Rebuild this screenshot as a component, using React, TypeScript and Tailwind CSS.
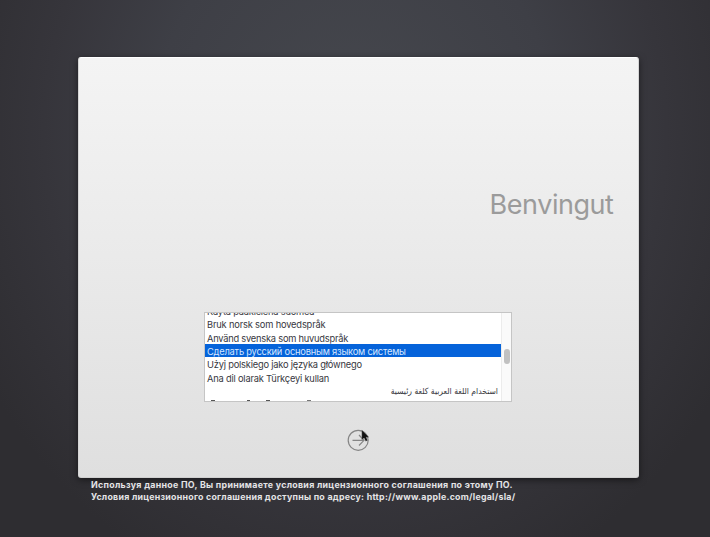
const rows = [
  { text: "Käytä pääkielenä suomea", style: "tracking-[-0.23px]" },
  { text: "Bruk norsk som hovedspråk", style: "tracking-[-0.17px]" },
  { text: "Använd svenska som huvudspråk", style: "tracking-[-0.23px]" },
  { text: "Сделать русский основным языком системы", style: "bg-[#0563da] text-[#d4e6ff] tracking-[-0.2px]" },
  { text: "Użyj polskiego jako języka głównego", style: "tracking-[-0.2px]" },
  { text: "Ana dil olarak Türkçeyi kullan", style: "tracking-[-0.2px]" },
];

function LanguageList() {
  return (
    <div className="mt-[254px] ml-[125px] flex h-[90px] w-[308px] shrink-0 overflow-hidden border border-[#c5c5c5] bg-white font-['Inter','DejaVu_Sans',sans-serif] text-[9.3px] text-[#38383e]">
      <div className="-mt-[9px] w-[296px] shrink-0">
        {rows.map((row) => (
          <div key={row.text} className={`h-[13.33px] pl-[2px] leading-[15px] whitespace-nowrap ${row.style}`}>
            <span>{row.text}</span>
          </div>
        ))}
        <div dir="rtl" className="h-[13.33px] pr-[3px] font-['DejaVu_Sans_Condensed','DejaVu_Sans',sans-serif] text-[8.5px] leading-[15px] whitespace-nowrap">
          <span>استخدام اللغة العربية كلغة رئيسية</span>
        </div>
        {/* Tops of the next row's letters */}
        <div className="mt-[2.6px] flex h-px pl-[6px]">
          <i className="h-px w-[4px] bg-[#555]" />
          <i className="ml-[32px] h-px w-[3px] bg-[#555]" />
          <i className="ml-[16px] h-px w-[4px] bg-[#555]" />
          <i className="ml-[37px] h-px w-[4px] bg-[#777]" />
        </div>
      </div>
      <div className="flex flex-1 justify-center border-l border-[#ececec] bg-[#fafafa] pt-[36px]">
        <div className="h-[15px] w-[6px] rounded-full bg-[#c1c1c1]" />
      </div>
    </div>
  );
}

function ContinueButton() {
  return (
    <button aria-label="Continue" className="mt-[25px] ml-[266px] h-[28px] w-[28px] shrink-0">
      <svg viewBox="0 0 28 28" className="h-[28px] w-[28px] overflow-visible">
        <g fill="none" stroke="#858585" strokeWidth="1.2">
          <circle cx="13.2" cy="13.3" r="10" />
          <path d="M7.5 13.3H19M14 8L19 13.3L14 18.5" />
        </g>
        <path d="M16.8 3V12.8L19.1 11L20.7 14.2L22.6 13.4L21.2 10.2H24Z" fill="#111" stroke="#aaa" strokeWidth="0.3" />
      </svg>
    </button>
  );
}

export default function App() {
  return (
    <main className="h-[537px] w-[710px] overflow-hidden bg-[radial-gradient(ellipse_at_50%_25%,#46484e_0%,#3e3f46_40%,#36353b_62%,#2e2d31_85%)] pt-[57px] font-['Inter',sans-serif]">
      <section className="ml-[78px] flex h-[421px] w-[560.5px] flex-col rounded-[3px] border border-t-white border-r-[#d5d5d5] border-b-[#d0d0d0] border-l-[#d5d5d5] bg-linear-to-b from-[#f4f4f4] to-[#dfdfdf] shadow-[0_2px_7px_rgba(0,0,0,0.5)]">
        <h1 className="h-0 shrink-0 pr-[24px] text-right text-[27px] leading-[293px] font-normal tracking-[-0.45px] text-[#9b9b9b]">
          <span>Benvingut</span>
        </h1>
        <LanguageList />
        <ContinueButton />
      </section>
      <footer className="mt-[1px] ml-[91px] text-[8.8px] leading-[12px] font-bold whitespace-nowrap text-[#e4e4e6]">
        <p className="tracking-[0.31px]">
          <span>Используя данное ПО, Вы принимаете условия лицензионного соглашения по этому ПО.</span>
        </p>
        <p className="tracking-[0.27px]">
          <span>Условия лицензионного соглашения доступны по адресу: http://www.apple.com/legal/sla/</span>
        </p>
      </footer>
    </main>
  );
}
